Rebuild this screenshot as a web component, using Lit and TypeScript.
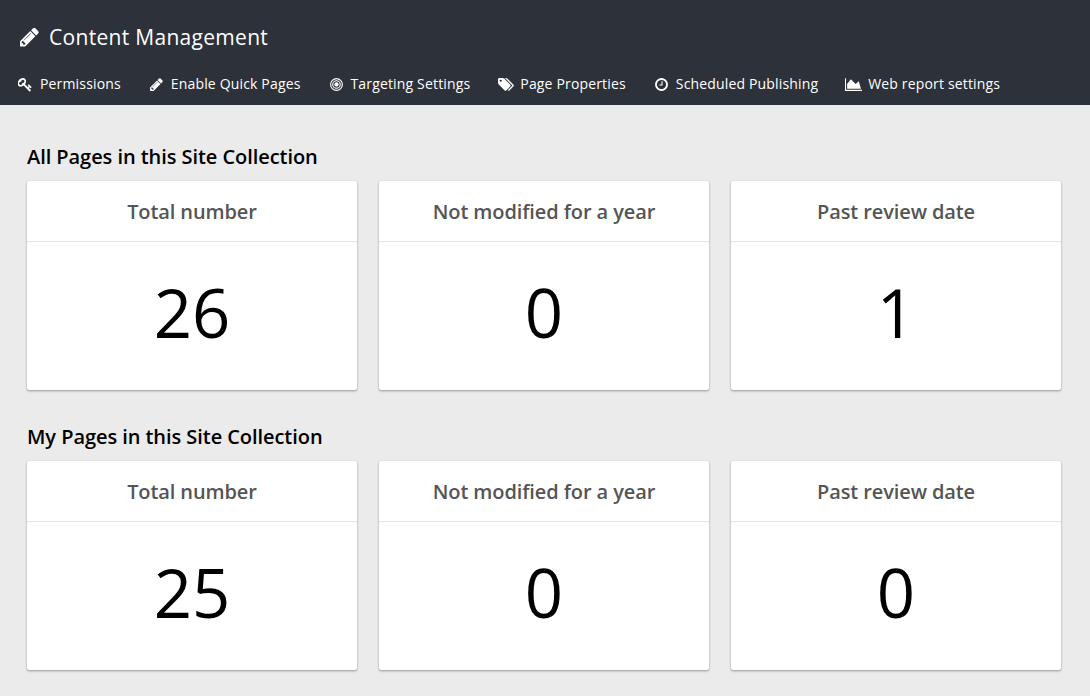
import { LitElement, html, css, svg } from "lit";
import { customElement } from "lit/decorators.js";

const pencil = svg`<path d="M491 1536l91-91-235-235-91 91v107h128v128h107zm523-928q0-22-22-22-10 0-17 7l-542 542q-7 7-7 17 0 22 22 22 10 0 17-7l542-542q7-7 7-17zm-54-192l416 416-832 832h-416v-416zm683 96q0 53-37 90l-166 166-416-416 166-165q36-38 90-38 53 0 91 38l235 234q37 39 37 91z"/>`;
const key = svg`<path d="M832 512q0-80-56-136t-136-56-136 56-56 136q0 42 19 83-41-19-83-19-80 0-136 56t-56 136 56 136 136 56 136-56 56-136q0-42-19-83 41 19 83 19 80 0 136-56t56-136zm851 704q0 17-49 66t-66 49q-9 0-28.5-16t-36.5-33-38.5-40-24.5-26l-96 96 220 220q28 28 28 68 0 42-39 81t-81 39q-40 0-68-28l-671-671q-176 131-365 131-163 0-265.5-102.5t-102.5-265.5q0-160 95-313t248-248 313-95q163 0 265.5 102.5t102.5 265.5q0 189-131 365l355 355 96-96q-3-3-26-24.5t-40-38.5-33-36.5-16-28.5q0-17 49-66t66-49q13 0 23 10 6 6 46 44.5t82 79.5 86.5 86 73 78 28.5 41z"/>`;
const target = svg`<g fill="none" stroke="currentColor" stroke-width="135"><circle cx="768" cy="896" r="700"/><circle cx="768" cy="896" r="448"/></g><circle cx="768" cy="896" r="256"/>`;
const tags = svg`<path d="M448 448q0-53-37.500-90.500t-90.500-37.500-90.500 37.500-37.500 90.500 37.500 90.500 90.500 37.500 90.500-37.500 37.500-90.500zm1067 576q0 53-37 90l-491 492q-39 37-91 37-53 0-90-37l-715-716q-38-37-64.500-101t-26.500-117v-416q0-52 38-90t90-38h416q53 0 117 26.500t102 64.500l715 714q37 39 37 91zm384 0q0 53-37 90l-491 492q-39 37-91 37-36 0-59-14t-53-45l470-470q37-37 37-90 0-52-37-91l-715-714q-38-38-102-64.500t-117-26.500h224q53 0 117 26.500t102 64.500l715 714q37 39 37 91z"/>`;
const clock = svg`<path d="M896 544v448q0 14-9 23t-23 9h-320q-14 0-23-9t-9-23v-64q0-14 9-23t23-9h224v-352q0-14 9-23t23-9h64q14 0 23 9t9 23zm416 352q0-148-73-273t-198-198-273-73-273 73-198 198-73 273 73 273 198 198 273 73 273-73 198-198 73-273zm224 0q0 209-103 385.500t-279.500 279.500-385.500 103-385.500-103-279.500-279.500-103-385.500 103-385.500 279.500-279.500 385.500-103 385.500 103 279.500 279.500 103 385.500z"/>`;
const chart = svg`<path d="M2048 1536v128h-2048v-1536h128v1408h1920zm-384-1024l256 896h-1664v-576l448-576 576 576z"/>`;

const nav = [
  { label: "Permissions", icon: key, box: "64 0 1664 1792", w: 14, h: 15, cls: "" },
  { label: "Enable Quick Pages", icon: pencil, box: "128 0 1536 1792", w: 13, h: 15, cls: "" },
  { label: "Targeting Settings", icon: target, box: "0 0 1536 1792", w: 13, h: 15, cls: "" },
  { label: "Page Properties", icon: tags, box: "0 0 1920 1792", w: 16, h: 15, cls: "wide" },
  { label: "Scheduled Publishing", icon: clock, box: "0 0 1536 1792", w: 13, h: 15, cls: "" },
  { label: "Web report settings", icon: chart, box: "0 0 2048 1792", w: 17, h: 15, cls: "wider" },
];

const sections = [
  {
    title: "All Pages in this Site Collection",
    cards: [["Total number", "26"], ["Not modified for a year", "0"], ["Past review date", "1"]],
  },
  {
    title: "My Pages in this Site Collection",
    cards: [["Total number", "25"], ["Not modified for a year", "0"], ["Past review date", "0"]],
  },
];

@customElement("app-root")
export class AppRoot extends LitElement {
  static styles = css`
    :host {
      display: block;
      box-sizing: border-box;
      height: 696px;
      overflow: hidden;
      background: #ebebeb;
      color: #000;
      font-family: "Open Sans", sans-serif;
    }
    svg { display: block; fill: currentColor; flex: none; }
    .header {
      box-sizing: border-box;
      height: 105px;
      padding: 22px 18px 0;
      background: #2d3139;
      color: #fff;
    }
    .title {
      display: flex;
      align-items: center;
      gap: 10px;
      height: 30px;
      margin: 0;
      padding-left: 2px;
      font-size: 21px;
      font-weight: 400;
      letter-spacing: 0.3px;
      white-space: nowrap;
    }
    .nav { display: flex; gap: 29px; height: 20px; margin-top: 22px; }
    .item {
      display: flex;
      align-items: center;
      gap: 8px;
      font-size: 14px;
      line-height: 20px;
      letter-spacing: 0.16px;
      white-space: nowrap;
    }
    .wide svg { margin: 0 -1.5px 0 -1.5px; }
    .wider svg { margin: 0 -1.5px 0 -2.5px; }
    .main { padding: 36px 29px 0 27px; }
    .section { margin-bottom: 31px; }
    .heading { margin: 0; height: 40px; font-size: 20px; line-height: 32px; font-weight: 600; letter-spacing: -0.06px; }
    .cards { display: grid; grid-template-columns: repeat(3, 330px); gap: 22px; }
    .card {
      height: 209px;
      border-radius: 2px;
      background: #fff;
      box-shadow: 0 1px 3px rgba(0, 0, 0, 0.16), 0 1px 2px rgba(0, 0, 0, 0.24);
      text-align: center;
    }
    .label {
      box-sizing: border-box;
      height: 61px;
      border-bottom: 1px solid #e6e6e6;
      color: #555;
      font-size: 20px;
      line-height: 62px;
      font-weight: 600;
      letter-spacing: -0.1px;
    }
    .value { font-size: 67px; line-height: 140px; }
  `;

  render() {
    return html`
      <header class="header">
        <h1 class="title"><svg width="19" height="22" viewBox="128 0 1536 1792">${pencil}</svg>Content Management</h1>
        <nav class="nav">
          ${nav.map((n) => html`<a class="item ${n.cls}"><svg width=${n.w} height=${n.h} viewBox=${n.box}>${n.icon}</svg>${n.label}</a>`)}
        </nav>
      </header>
      <main class="main">
        ${sections.map((s) => html`
          <section class="section">
            <h2 class="heading">${s.title}</h2>
            <div class="cards">
              ${s.cards.map(([label, value]) => html`
                <article class="card">
                  <div class="label">${label}</div>
                  <div class="value">${value}</div>
                </article>`)}
            </div>
          </section>`)}
      </main>
    `;
  }
}
